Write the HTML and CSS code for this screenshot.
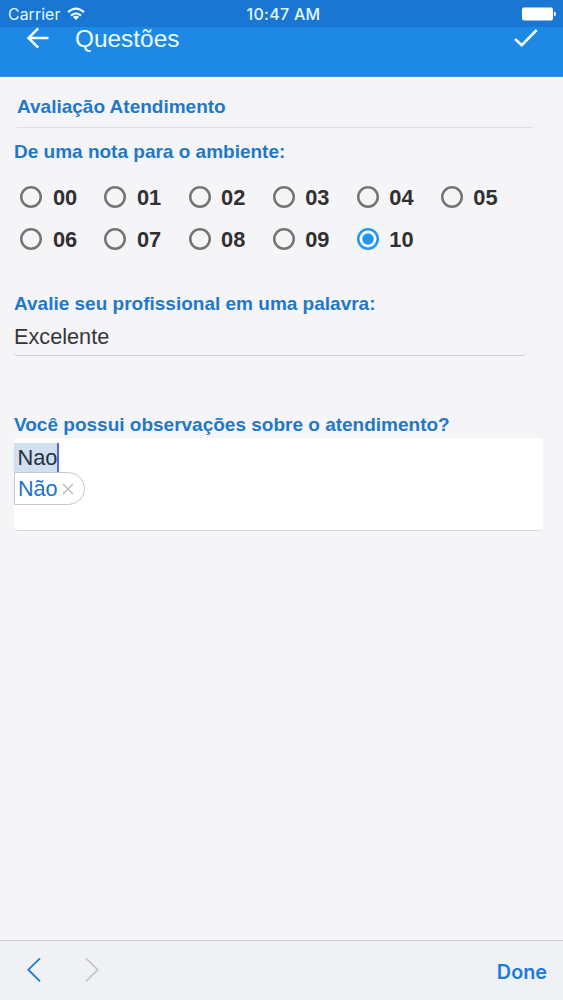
FILE: index.html
```html
<!DOCTYPE html>
<html lang="pt">
<head>
<meta charset="utf-8">
<title>Questões</title>
<link rel="stylesheet" href="styles.css">
</head>
<body>
<div class="status">
  <div class="status-left"><span class="carrier">Carrier</span>
    <svg class="wifi" width="18" height="14" viewBox="0 0 18 14" fill="none" stroke="#e6ffff" stroke-width="2.2"><path d="M1 5.2Q9-1.8 17 5.2M4 8.6Q9 4.2 14 8.6"/><path d="M9 13L5.8 10Q9 7.5 12.2 10Z" fill="#e6ffff" stroke="none"/></svg>
  </div>
  <span class="time">10:47 AM</span>
  <svg class="battery" width="34" height="14" viewBox="0 0 34 14" fill="#fff"><rect x="0" y="0.4" width="31" height="13.2" rx="2"/><path d="M32 4.6Q34 5 34 7T32 9.4Z"/></svg>
</div>
<header class="bar">
  <svg class="back" width="24" height="22" viewBox="0 0 24 22" fill="none" stroke="#f0ffff" stroke-width="2.5"><path d="M22.5 11H2.8M12.2 1.3L2.5 11L12.2 20.7"/></svg>
  <h1 class="title">Questões</h1>
  <svg class="check" width="26" height="20" viewBox="0 0 26 20" fill="none" stroke="#f0ffff" stroke-width="2.5"><path d="M2 11L8.7 17.2L23.7 2"/></svg>
</header>
<main class="form">
  <h2 class="section">Avaliação Atendimento</h2>
  <div class="label label-first">De uma nota para o ambiente:</div>
  <div class="grades">
    <div class="grade"><i class="radio"></i>00</div>
    <div class="grade"><i class="radio"></i>01</div>
    <div class="grade"><i class="radio"></i>02</div>
    <div class="grade"><i class="radio"></i>03</div>
    <div class="grade"><i class="radio"></i>04</div>
    <div class="grade"><i class="radio"></i>05</div>
    <div class="grade"><i class="radio"></i>06</div>
    <div class="grade"><i class="radio"></i>07</div>
    <div class="grade"><i class="radio"></i>08</div>
    <div class="grade"><i class="radio"></i>09</div>
    <div class="grade"><i class="radio radio-on"></i>10</div>
  </div>
  <div class="label label-word">Avalie seu profissional em uma palavra:</div>
  <div class="input">Excelente</div>
  <div class="label label-notes">Você possui observações sobre o atendimento?</div>
  <div class="notes">
    <div class="typed">Nao</div>
    <div class="suggestion">Não<svg width="12" height="12" viewBox="0 0 12 12" stroke="#bcbcbc" stroke-width="1.5"><path d="M1 1L11 11M11 1L1 11"/></svg></div>
  </div>
</main>
<footer class="keys">
  <svg class="prev" width="14" height="26" viewBox="0 0 14 26" fill="none" stroke="#1b78d8" stroke-width="1.8"><path d="M13 1.3L1.3 12.7L13 24.3"/></svg>
  <svg class="next" width="14" height="26" viewBox="0 0 14 26" fill="none" stroke="#c5c6c8" stroke-width="1.8"><path d="M1 1.3L12.7 12.7L1 24.3"/></svg>
  <span class="done">Done</span>
</footer>
</body>
</html>
```
FILE: styles.css
```css
* { box-sizing: border-box; }
body {
  margin: 0;
  height: 1000px;
  display: flex;
  flex-direction: column;
  overflow: hidden;
  background: #f5f4f6;
  font-family: "Liberation Sans", Arial, sans-serif;
}
.status {
  height: 27px;
  display: grid;
  grid-template-columns: 1fr auto 1fr;
  align-items: center;
  padding: 1px 8px 0 8px;
  background: #1976d2;
  color: #e2faff;
  font-family: Inter, sans-serif;
  font-size: 16px;
  line-height: 26px;
}
.status-left { display: flex; align-items: center; gap: 7px; }
.carrier { padding-top: 1px; font-size: 15.8px; letter-spacing: 0.1px; }
.wifi { margin-top: -1px; }
.time { font-weight: 500; letter-spacing: 0.3px; margin: -2px 0 0 4px; }
.battery { justify-self: end; margin: -2px -1px 0 0; }
.bar {
  height: 50px;
  display: flex;
  align-items: flex-start;
  padding: 0 24px 0 26px;
  background: #1e88e5;
  border-bottom: 1px solid #3291e4;
}
.title {
  margin: -3px auto 0 25px;
  color: #e9fbff;
  font-size: 24.4px;
  line-height: 29px;
  font-weight: 400;
}
.check { margin-top: 1px; }
.form { flex: 1; padding: 0 20px 0 14px; }
.section {
  margin: 0 10px 0 3px;
  height: 51px;
  padding-top: 19px;
  border-bottom: 1px solid #dedddf;
  color: #1f78c8;
  font-size: 19px;
  line-height: 22px;
}
.label {
  color: #1f78c8;
  font-size: 19px;
  line-height: 22px;
  font-weight: 700;
}
.label-first { margin-top: 13px; }
.grades {
  display: grid;
  grid-template-columns: repeat(6, 84.1px);
  grid-auto-rows: 42px;
  margin-top: 14px;
  padding-left: 6.4px;
}
.grade {
  display: flex;
  align-items: center;
  gap: 10.5px;
  color: #303032;
  font-size: 21.8px;
  font-weight: 700;
}
.radio {
  width: 22px;
  height: 22px;
  margin-top: -2px;
  box-shadow: inset 0 0 0 2.5px #747476;
  border-radius: 50%;
}
.radio-on {
  box-shadow: inset 0 0 0 2.5px #2196f3;
  background: radial-gradient(circle, #2196f3 5.2px, #f5faff 6px);
}
.label-word { margin-top: 32px; }
.input {
  width: 512px;
  height: 41px;
  border-bottom: 1px solid #cfced3;
  border-radius: 4px;
  color: #363638;
  font-size: 21.7px;
  line-height: 43px;
}
.label-notes { margin-top: 58px; }
.notes {
  height: 93px;
  margin-top: 2px;
  padding-top: 5px;
  background: #fff;
  border-bottom: 1px solid #d9d8dc;
  border-radius: 4px;
}
.typed {
  width: 45px;
  height: 29px;
  padding-left: 3.5px;
  background: #d1dfee;
  border-right: 2px solid #4e68df;
  color: #27323f;
  font-size: 21.8px;
  line-height: 29px;
}
.suggestion {
  width: 71px;
  height: 33px;
  display: flex;
  align-items: center;
  gap: 4px;
  padding-left: 3px;
  border: 1px solid #c8c8ca;
  border-radius: 0 17px 17px 0;
  background: #fff;
  color: #1b73d2;
  font-size: 21.6px;
  line-height: 31px;
}
.keys {
  height: 60px;
  display: flex;
  align-items: center;
  padding: 0 16px 2px 27px;
  border-top: 1px solid #c5c9ca;
  background: #eff1f4;
}
.next { margin-left: 44px; }
.done {
  margin-left: auto;
  padding-top: 4px;
  color: #1b7bdb;
  font-family: Inter, sans-serif;
  font-size: 19.8px;
  font-weight: 600;
}
```
